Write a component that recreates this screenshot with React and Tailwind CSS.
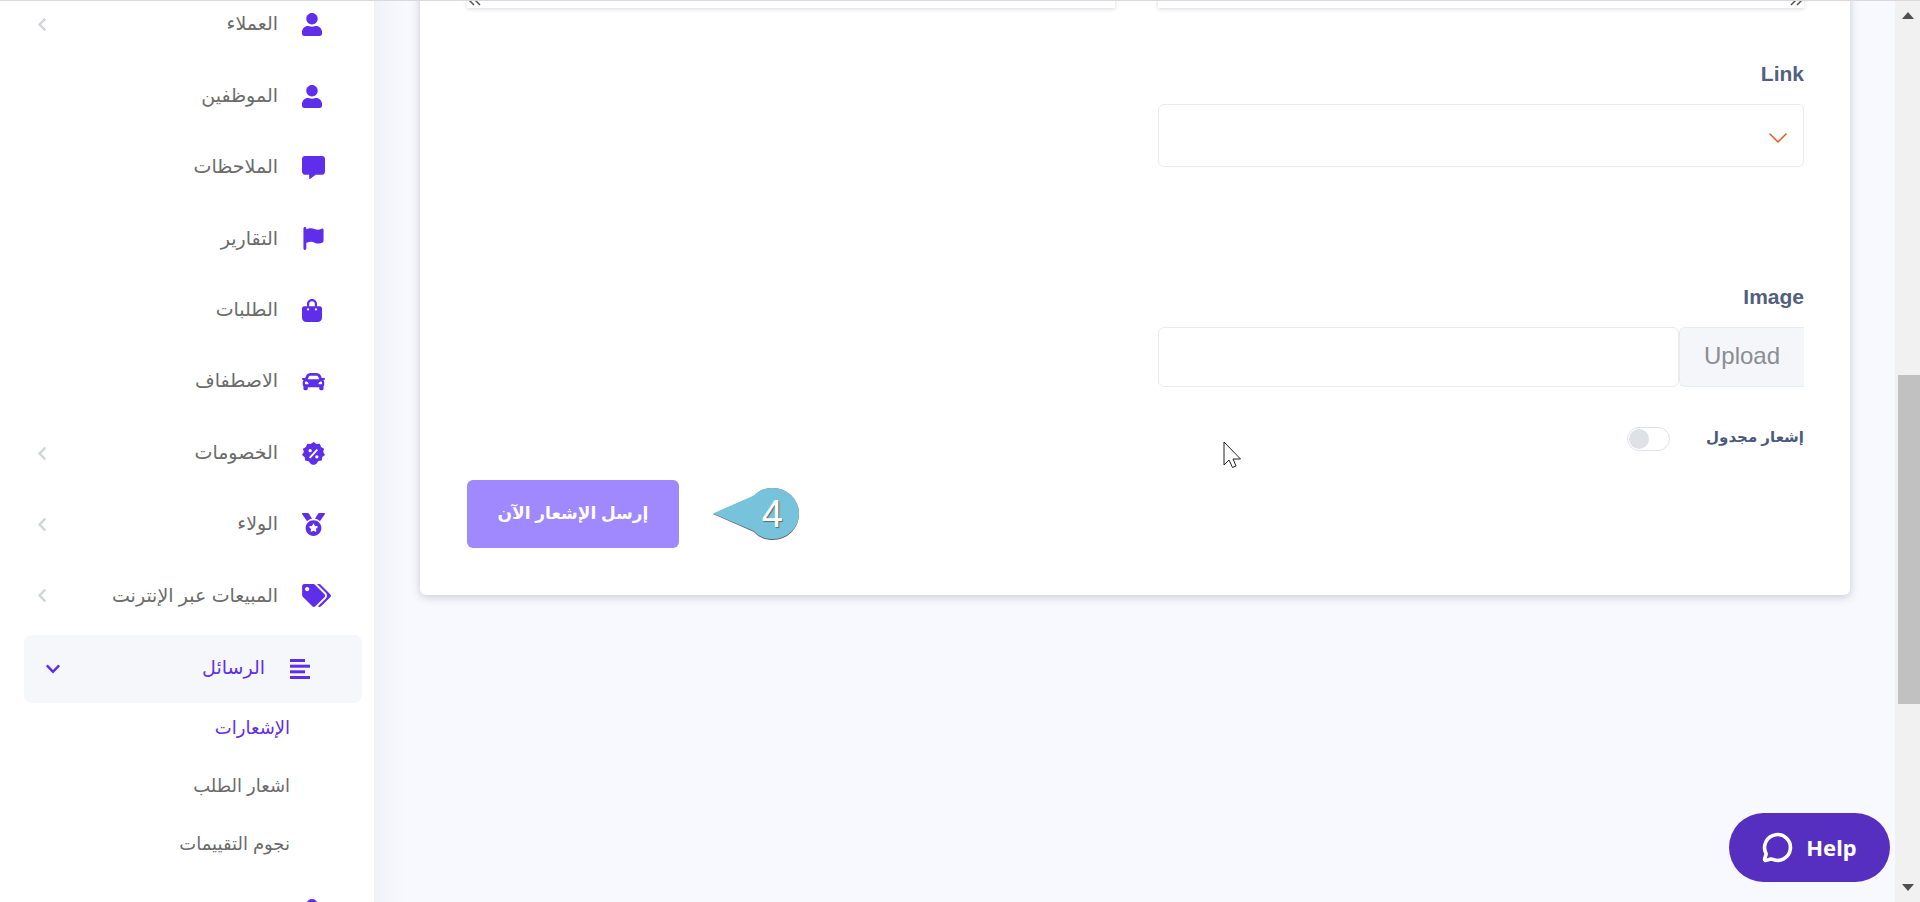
import React from "react";
import { ChevronDown, MessageCircle } from "lucide-react";
import { FaUser, FaCommentAlt, FaChevronLeft, FaChevronDown, FaCar, FaMedal, FaTags } from "react-icons/fa";
import { FaFlag, FaBagShopping } from "react-icons/fa6";

const Discount = ({ className }) => (
  <svg viewBox="0 0 24 24" className={className} fill="currentColor">
    <path d="M12 0l3 2.100 3.600-.4 1.300 3.400 3.100 1.900-.9 3.500L24 13.500l-2.900 2.200-.4 3.600-3.600.6L14.800 23 12 24l-2.800-1-2.300-3-3.600-.6-.4-3.600L0 13.500l1.900-3-.9-3.500 3.100-1.900L5.400 1.700 9 2.100z" />
    <path d="M8 16.500L16 8" stroke="#fff" strokeWidth="2" fill="none" />
    <circle cx="8.500" cy="9" r="1.700" fill="#fff" />
    <circle cx="15.500" cy="15.500" r="1.700" fill="#fff" />
  </svg>
);

const menu = [
  { label: "العملاء", icon: FaUser, size: "w-[20px]", arrow: true },
  { label: "الموظفين", icon: FaUser, size: "w-[20px]" },
  { label: "الملاحظات", icon: FaCommentAlt, size: "w-[23px]" },
  { label: "التقارير", icon: FaFlag, size: "w-[23px]" },
  { label: "الطلبات", icon: FaBagShopping, size: "w-[20px]" },
  { label: "الاصطفاف", icon: FaCar, size: "w-[23px]" },
  { label: "الخصومات", icon: Discount, size: "w-[23px]", arrow: true },
  { label: "الولاء", icon: FaMedal, size: "w-[23px]", arrow: true },
  { label: "المبيعات عبر الإنترنت", icon: FaTags, size: "w-[29px]", arrow: true },
];

const subMenu = [
  { label: "الإشعارات", active: true },
  { label: "اشعار الطلب" },
  { label: "نجوم التقييمات" },
];

const ResizeGrip = ({ className }) => (
  <svg viewBox="0 0 14 6" className={className} stroke="#555" strokeWidth="1.500">
    <path d="M1 0l5 5M7 0l5 5" />
  </svg>
);

const Sidebar = () => (
  <aside dir="rtl" className="w-[374px] shrink-0 bg-white -mt-[12px] text-[#6b6b6b]">
    {menu.map((item) => {
      const Icon = item.icon;
      return (
        <div key={item.label} className="flex h-[71.400px] items-center pr-[49px] pl-[37px]">
          <span className="flex w-[23px] justify-end text-[#5f2eea]">
            <Icon className={`h-[23px] shrink-0 ${item.size}`} />
          </span>
          <span className="mr-[24px] text-[19px]">{item.label}</span>
          {item.arrow && <FaChevronLeft className="mr-auto h-[15px] w-[10px] text-[#d1d5db]" />}
        </div>
      );
    })}
    <div className="mt-[3px] mr-[12px] flex h-[68px] w-[338px] items-center rounded-lg bg-[#f5f7fb] pr-[52px] pl-[22px] text-[#5f2eea]">
      <svg viewBox="0 0 20 20" className="h-5 w-5" fill="currentColor">
        <rect y="0" width="15" height="3" />
        <rect y="5.700" width="20" height="3" />
        <rect y="11.300" width="15" height="3" />
        <rect y="17" width="20" height="3" />
      </svg>
      <span className="mr-[25px] text-[19px]">الرسائل</span>
      <FaChevronDown className="mr-auto h-[16px] w-[14px]" />
    </div>
    <div className="-mt-[3px]">
      {subMenu.map((item) => (
        <div
          key={item.label}
          className={`flex h-[58px] items-center pr-[84px] text-[18px] ${item.active ? "text-[#5f2eea]" : ""}`}
        >
          {item.label}
        </div>
      ))}
    </div>
    <div className="flex h-[74px] items-center pr-[52px] text-[#5f2eea]">
      <FaUser className="h-[23px] w-[20px]" />
    </div>
  </aside>
);

const App = () => {
  return (
    <div className="relative flex h-screen w-full overflow-hidden border-t border-[#d9d9d9] bg-[#f8f9fe] font-['Liberation_Sans','DejaVu_Sans',sans-serif]">
      <Sidebar />

      <main className="relative min-w-0 flex-1 bg-gradient-to-r from-[#f1f2f8] to-[#f8f9fe] to-[30px]">
        <section className="ml-[46px] -mt-[21px] w-[1430px] rounded-b-md bg-white pt-0 pr-[46px] pb-[47px] pl-[47px] shadow-[0_2px_8px_rgba(60,60,90,0.25)]">
          <div className="grid grid-cols-[648px_646px] gap-x-[43px]">
            <div className="relative h-[28px] bg-white shadow-[0_1px_4px_rgba(60,60,90,0.2)]">
              <ResizeGrip className="absolute bottom-[2px] left-[1px] h-[6px] w-[14px]" />
            </div>
            <div className="relative h-[28px] bg-white shadow-[0_1px_4px_rgba(60,60,90,0.2)]">
              <ResizeGrip className="absolute right-[1px] bottom-[2px] h-[6px] w-[14px] -scale-x-100" />
            </div>
            <div />
            <div>
              <div className="mt-[55px] text-right text-[21px] leading-[22px] font-bold text-[#525f7f]">Link</div>
              <div className="mt-[19px] flex h-[63px] items-center justify-end rounded-md border border-[#e9ecef] bg-white pr-[9px]">
                <ChevronDown className="mt-[5px] h-[32px] w-[32px] text-[#f4511e]" strokeWidth={1.100} />
              </div>
              <div className="mt-[119px] text-right text-[21px] leading-[22px] font-bold text-[#525f7f]">Image</div>
              <div className="mt-[19px] flex h-[60px]">
                <div className="flex-1 rounded-md border border-[#e9ecef] bg-white" />
                <div className="flex w-[125px] items-center justify-center rounded-l-md border border-r-0 border-[#e9ecef] bg-[#f5f6f9] pb-[2px] text-[24px] text-[#8a8d93]">
                  Upload
                </div>
              </div>
              <div className="mt-[40px] flex h-[23px] items-center justify-end">
                <div className="flex h-[24px] w-[43px] items-center rounded-full border border-[#e1e3e8] bg-white pl-[1px]">
                  <span className="h-[20px] w-[20px] rounded-full bg-[#dee2e6]" />
                </div>
                <span dir="rtl" className="ml-[36px] pb-[3px] text-[15px] font-bold text-[#4a5a7d]">إشعار مجدول</span>
              </div>
            </div>
          </div>

          <div className="mt-[30px] flex items-center">
            <button
              dir="rtl"
              className="h-[68px] w-[212px] rounded-md bg-[#a088ff] text-[17px] font-bold text-white"
            >
              إرسل الإشعار الآن
            </button>
            <div className="relative ml-[34px] h-[52px] w-[87px]">
              <svg viewBox="0 0 87 52" className="h-full w-full">
                <path d="M0 26 L41 8 C46 2 53 0 60 0 A26 26 0 0 1 60 52 C53 52 46 50 41 44 Z" fill="#666" />
                <path d="M0 25.500 L41 7.500 C46 2 53 0 60 0 A26 25.500 0 0 1 60 51 C53 51 46 49 41 43 Z" fill="#77c3dc" />
              </svg>
              <span className="absolute top-0 right-[17px] text-[38px] leading-[52px] text-white [text-shadow:1px_1px_1px_#666]">4</span>
            </div>
          </div>
        </section>

        {/* mouse pointer left in the screenshot */}
        <svg viewBox="0 0 19 28" className="absolute top-[440px] left-[849px] h-[28px] w-[19px]" fill="#fff" stroke="#222" strokeWidth="1">
          <path d="M1 1v23l5-5 3.500 7.500 3.500-1.500-3-7h7.500z" />
        </svg>

        <button className="absolute top-[812px] left-[1355px] flex h-[69px] w-[161px] items-center justify-center gap-[13px] rounded-full bg-[#572fc0] font-['Noto_Sans',sans-serif] text-[22px] font-bold text-white">
          <MessageCircle className="h-[31px] w-[31px]" strokeWidth={2.800} />
          Help
        </button>
      </main>

      {/* page scrollbar */}
      <div className="relative flex w-[25px] shrink-0 flex-col items-center bg-[#f1f1f1]">
        <span className="mt-[11px] h-0 w-0 border-x-[6px] border-b-[7px] border-x-transparent border-b-[#505050]" />
        <span className="absolute top-[374px] right-0 h-[329px] w-[22px] bg-[#c1c1c1]" />
        <span className="mt-auto mb-[11px] h-0 w-0 border-x-[6px] border-t-[7px] border-x-transparent border-t-[#505050]" />
      </div>
    </div>
  );
};

export default App;
